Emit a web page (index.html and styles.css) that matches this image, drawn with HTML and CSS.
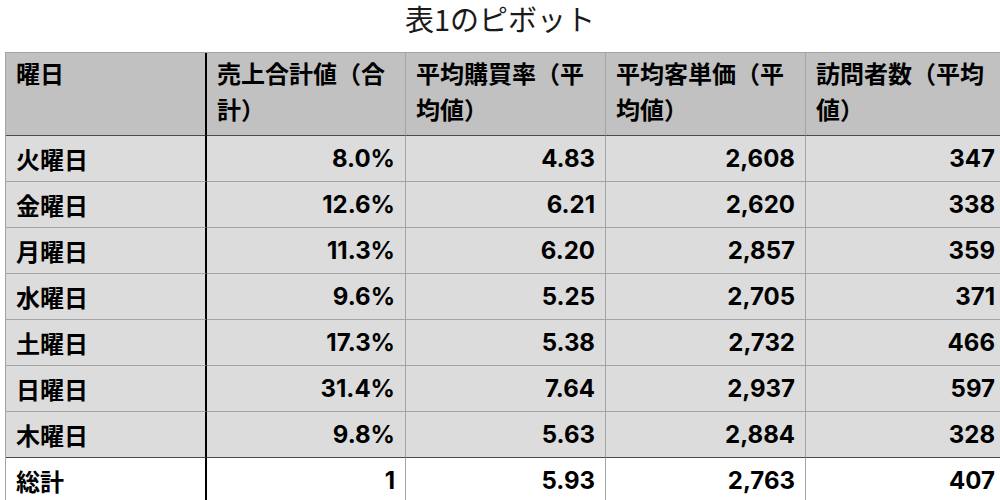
FILE: index.html
```html
<!DOCTYPE html>
<html lang="ja">
<head>
<meta charset="utf-8">
<title>表1のピボット</title>
<link rel="stylesheet" href="styles.css">
</head>
<body>
<div class="title">表1のピボット</div>
<table class="pivot">
  <thead>
    <tr>
      <th class="c1">曜日</th>
      <th class="c2">売上合計値（合計）</th>
      <th class="c3">平均購買率（平均値）</th>
      <th class="c4">平均客単価（平均値）</th>
      <th class="c5">訪問者数（平均値）</th>
    </tr>
  </thead>
  <tbody>
    <tr><td>火曜日</td><td>8.0%</td><td>4.83</td><td>2,608</td><td>347</td></tr>
    <tr><td>金曜日</td><td>12.6%</td><td>6.21</td><td>2,620</td><td>338</td></tr>
    <tr><td>月曜日</td><td>11.3%</td><td>6.20</td><td>2,857</td><td>359</td></tr>
    <tr><td>水曜日</td><td>9.6%</td><td>5.25</td><td>2,705</td><td>371</td></tr>
    <tr><td>土曜日</td><td>17.3%</td><td>5.38</td><td>2,732</td><td>466</td></tr>
    <tr><td>日曜日</td><td>31.4%</td><td>7.64</td><td>2,937</td><td>597</td></tr>
    <tr class="last"><td>木曜日</td><td>9.8%</td><td>5.63</td><td>2,884</td><td>328</td></tr>
    <tr class="total"><td>総計</td><td>1</td><td>5.93</td><td>2,763</td><td>407</td></tr>
  </tbody>
</table>
</body>
</html>
```
FILE: styles.css
```css
html, body {
  margin: 0;
  padding: 0;
  overflow: hidden;
  background: #ffffff;
}

body {
  width: 1000px;
  height: 500px;
  font-family: Inter, "Noto Sans CJK JP", sans-serif;
  color: #000;
}

.title {
  font-family: "Noto Sans CJK JP", sans-serif;
  font-weight: 400;
  font-size: 29px;
  line-height: 44px;
  height: 44px;
  margin-top: -4px;
  margin-bottom: 12px;
  text-align: center;
  color: #1a1a1a;
}

.pivot {
  margin-left: 5px;
  border-collapse: separate;
  border-spacing: 0;
  table-layout: fixed;
  width: 1001px;
  border-top: 1px solid #a4a4a4;
  border-left: 1px solid #a4a4a4;
}

.pivot th,
.pivot td {
  box-sizing: border-box;
  font-size: 24px;
  font-weight: 700;
  line-height: 36px;
  border-right: 1px solid #a4a4a4;
  border-bottom: 1px solid #a4a4a4;
  padding: 5px 10px 4px 10px;
  vertical-align: top;
}

.pivot th {
  background: #c0c1c0;
  text-align: left;
  height: 83px;
  padding-top: 2px;
  padding-bottom: 8px;
  border-bottom-color: #4a4a4a;
  font-family: "Noto Sans CJK JP", sans-serif;
}

.pivot .c1 { width: 201px; }
.pivot .c2 { width: 199px; }
.pivot .c3 { width: 200px; }
.pivot .c4 { width: 200px; }
.pivot .c5 { width: 200px; }

.pivot td {
  background: #dcdcdc;
  text-align: right;
  height: 46px;
}

.pivot th:first-child,
.pivot td:first-child {
  border-right: 2px solid #000;
  text-align: left;
  font-family: "Noto Sans CJK JP", sans-serif;
}

.pivot tr.last td {
  border-bottom-color: #4a4a4a;
}

.pivot tr.total td {
  background: #ffffff;
}
```
